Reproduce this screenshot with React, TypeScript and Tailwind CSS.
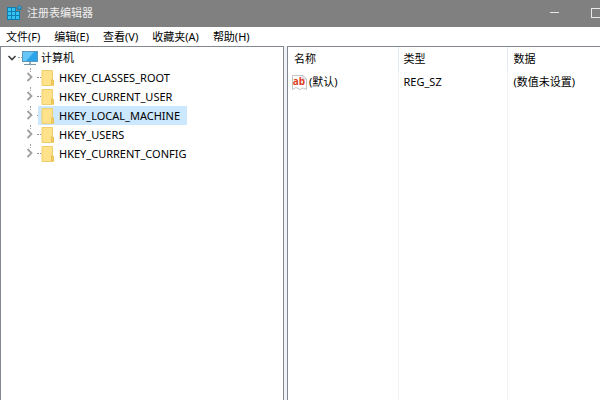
import React from "react";

const menuItems = ["文件(F)", "编辑(E)", "查看(V)", "收藏夹(A)", "帮助(H)"];

const hives = [
  { name: "HKEY_CLASSES_ROOT" },
  { name: "HKEY_CURRENT_USER" },
  { name: "HKEY_LOCAL_MACHINE", selected: true },
  { name: "HKEY_USERS" },
  { name: "HKEY_CURRENT_CONFIG" },
];

function RegistryIcon() {
  const cells = [
    [1, 3], [5, 3], [1, 7], [5, 7], [9, 7], [1, 11], [5, 11], [9, 11],
  ];
  return (
    <svg width="15" height="15" viewBox="0 0 15 15" aria-hidden="true">
      <path d="M0 2H9V6H13V15H0Z" fill="#0f7fb2" />
      {cells.map(([x, y]) => (
        <rect key={`${x}-${y}`} x={x} y={y} width="3" height="3" fill="#35c3f3" />
      ))}
      <path d="M12 0L15 2L14 5L11 5L9.5 3Z" fill="#1a7dab" />
      <path d="M11 2L13 1L14 3L12 4Z" fill="#43a8d0" />
    </svg>
  );
}

function ComputerIcon() {
  return (
    <svg width="16" height="16" viewBox="0 0 16 16" aria-hidden="true">
      <rect x="0.5" y="1.5" width="15" height="10" fill="#2ca4ea" stroke="#5c96bb" />
      <path d="M1 2H12L4 11H1Z" fill="#65c7f8" />
      <path d="M7 12H9V14H7Z" fill="#8fb0c2" />
      <path d="M2 14H14V15H2Z" fill="#7898aa" />
    </svg>
  );
}

function FolderIcon() {
  return (
    <svg width="13" height="16" viewBox="0 0 13 16" aria-hidden="true">
      <path d="M1 0.5H11.5V9.5L12.5 10.5V15.5H1Z" fill="#ffe289" stroke="#efcd6c" />
      <path d="M10.5 9.5V14.5H12.5V10.5Z" fill="#f6d266" stroke="#e6bf55" />
    </svg>
  );
}

function Chevron({ open = false }: { open?: boolean }) {
  return (
    <svg width="10" height="10" viewBox="0 0 10 10" fill="none" aria-hidden="true">
      {open ? (
        <path d="M1.5 3L5 6.5L8.5 3" stroke="#404040" strokeWidth="1.6" />
      ) : (
        <path d="M2.5 1L6.5 5L2.5 9" stroke="#a0a0a0" strokeWidth="1.8" />
      )}
    </svg>
  );
}

function StringValueIcon() {
  return (
    <svg width="15" height="15" viewBox="0 0 15 15" aria-hidden="true">
      <path d="M0.5 0.5H11L14.5 4V14.5L11 13L8 14.5L4 12.5L0.5 14.5Z" fill="#fff" stroke="#c4c4c4" />
      <path d="M11 0.5V4H14.5" fill="none" stroke="#c4c4c4" />
      <text x="7" y="10" textAnchor="middle" fontSize="10" fontWeight="700" fill="#dc3c22" fontFamily="Open Sans, sans-serif">
        ab
      </text>
    </svg>
  );
}

export default function App() {
  return (
    <div className="flex h-screen flex-col overflow-hidden bg-white font-['Noto_Sans','Noto_Sans_CJK_SC',sans-serif] text-[11px] leading-4 text-black">
      <header className="flex h-[27px] shrink-0 items-center overflow-hidden bg-[#808080] pb-[2px] pl-[7px] text-[#f0f0f0]">
        <RegistryIcon />
        <h1 className="ml-[5px]">注册表编辑器</h1>
        <div className="-mr-4 ml-auto flex h-full items-center">
          <button aria-label="最小化" className="flex h-6 w-11 items-center justify-center">
            <span className="h-px w-[9px] bg-[#e8e8e8]" />
          </button>
          <button aria-label="最大化" className="flex h-6 w-10 items-center justify-center">
            <span className="size-[10px] border border-[#e8e8e8]" />
          </button>
        </div>
      </header>

      <nav className="flex h-[19px] shrink-0 items-center gap-[14px] pl-[6px]">
        {menuItems.map((item) => (
          <button key={item} className="whitespace-nowrap">
            {item}
          </button>
        ))}
      </nav>

      <main className="flex min-h-0 flex-1 gap-[3px] bg-[#f0f2f7]">
        <section className="w-[284px] shrink-0 border-x border-t border-[#828790] bg-white pt-px">
          <div className="flex h-[19px] items-center pl-[6px]">
            <button aria-label="折叠" className="flex">
              <Chevron open />
            </button>
            <span className="ml-px w-1 border-t border-dotted border-[#a0a0a0]" />
            <ComputerIcon />
            <button className="ml-[3px]">计算机</button>
          </div>
          <ul className="pt-px">
            {hives.map((hive) => (
              <li key={hive.name} className="flex h-[19px] pl-6">
                <div className="flex w-[10px] flex-col items-center">
                  <span className="h-1 border-l border-dotted border-[#a0a0a0]" />
                  <button aria-label={`展开 ${hive.name}`} className="flex">
                    <Chevron />
                  </button>
                </div>
                <span className="ml-[2px] w-1 self-center border-t border-dotted border-[#909090]" />
                <button
                  className={`-ml-[3px] flex items-center gap-[5px] pr-[7px] pl-[3px] ${
                    hive.selected ? "bg-[#cce8ff]" : ""
                  }`}
                >
                  <FolderIcon />
                  <span>{hive.name}</span>
                </button>
              </li>
            ))}
          </ul>
        </section>

        <section className="flex min-w-0 flex-1 border-t border-l border-[#828790] bg-white">
          <table className="h-full w-full table-fixed border-collapse text-left">
            <colgroup>
              <col className="w-[110px]" />
              <col className="w-[109px]" />
              <col />
            </colgroup>
            <thead>
              <tr className="h-6">
                <th className="border-r border-[#e2e8f0] pl-[6px] font-normal">名称</th>
                <th className="border-r border-[#e2e8f0] pl-[5px] font-normal">类型</th>
                <th className="pl-[6px] font-normal">数据</th>
              </tr>
            </thead>
            <tbody>
              <tr className="h-[22px]">
                <td className="border-r border-[#f2f2f2] pl-1">
                  <span className="flex items-center gap-[2px]">
                    <StringValueIcon />
                    (默认)
                  </span>
                </td>
                <td className="border-r border-[#f2f2f2] pl-[5px]">REG_SZ</td>
                <td className="pl-[6px] whitespace-nowrap">(数值未设置)</td>
              </tr>
              <tr>
                <td className="border-r border-[#f2f2f2]" />
                <td className="border-r border-[#f2f2f2]" />
                <td />
              </tr>
            </tbody>
          </table>
        </section>
      </main>
    </div>
  );
}
